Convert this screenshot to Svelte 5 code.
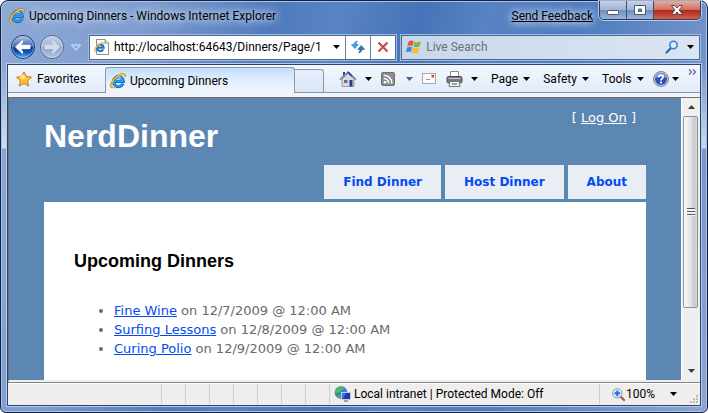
<script>
  let address = $state('http://localhost:64643/Dinners/Page/1');
  let search = $state('');

  const menu = ['Find Dinner', 'Host Dinner', 'About'];

  const dinners = [
    { id: 1, title: 'Fine Wine', date: '12/7/2009', time: '12:00 AM' },
    { id: 2, title: 'Surfing Lessons', date: '12/8/2009', time: '12:00 AM' },
    { id: 3, title: 'Curing Polio', date: '12/9/2009', time: '12:00 AM' }
  ];

  const toolMenus = ['Page', 'Safety', 'Tools'];
  const statusCells = [1, 2, 3, 4, 5, 6, 7];
</script>

{#snippet ieLogo(size)}
  <svg width={size} height={size} viewBox="0 0 16 16" aria-hidden="true">
    <path d="M12.9 10.6A4.9 4.9 0 1 1 13.3 8.4H4.6" fill="none" stroke="#1462b8" stroke-width="3.2" />
    <path d="M12.7 10.4A4.8 4.8 0 1 1 13.1 8.2H4.8" fill="none" stroke="#2c9df0" stroke-width="2" />
    <path d="M4.6 5.6A4.8 4.8 0 0 1 11 4.8" fill="none" stroke="#8fdcff" stroke-width="1" />
    <path d="M2.2 14.6C-.6 12.6 2.4 6.6 7.4 3.2C11.2.6 15.4.2 15 3.6" fill="none" stroke="#b87a0c" stroke-width="1.8" />
    <path d="M2.4 14.4C0 12.2 2.8 6.6 7.6 3.4C11.2 1 14.8.6 14.8 3.2" fill="none" stroke="#fbc638" stroke-width="1.2" />
    <path d="M2.2 14.6C3.4 15.2 4.8 14.6 6 13.8" fill="none" stroke="#eaa91d" stroke-width="1" />
  </svg>
{/snippet}

{#snippet caret()}
  <svg class="caret" width="7" height="4" viewBox="0 0 7 4" aria-hidden="true">
    <path d="M0 0H7L3.5 4Z" fill="currentColor" />
  </svg>
{/snippet}

<div class="window">
  <header class="title-bar">
    {@render ieLogo(16)}
    <span class="title">Upcoming Dinners - Windows Internet Explorer</span>
    <a class="feedback" href="#feedback">Send Feedback</a>
    <div class="window-buttons">
      <button aria-label="Minimize">
        <svg width="14" height="12" viewBox="0 0 14 12">
          <rect x="1.5" y="6.5" width="11" height="4" rx="1" fill="#fff" stroke="#4b5568" />
        </svg>
      </button>
      <button aria-label="Maximize">
        <svg width="14" height="12" viewBox="0 0 14 12">
          <path d="M1.5 1.5H12.5V10.5H1.5ZM5.5 5V7.5H8.5V5Z" fill="#fff" stroke="#4b5568" fill-rule="evenodd" />
        </svg>
      </button>
      <button class="close" aria-label="Close">
        <svg width="14" height="12" viewBox="0 0 14 12">
          <path d="M1.5 1.5H5L7 4L9 1.5H12.5L9.2 6L12.5 10.5H9L7 8L5 10.5H1.5L4.8 6Z" fill="#fff" stroke="#5b4a52" />
        </svg>
      </button>
    </div>
  </header>

  <div class="nav-bar">
    <div class="travel">
      <button class="back" aria-label="Back">
        <svg width="26" height="26" viewBox="0 0 26 26">
          <defs>
            <linearGradient id="back-fill" x1="0" y1="0" x2="0" y2="1">
              <stop offset="0" stop-color="#b9c9e8" />
              <stop offset=".48" stop-color="#3d66b4" />
              <stop offset=".5" stop-color="#0c2f84" />
              <stop offset=".75" stop-color="#1859b8" />
              <stop offset="1" stop-color="#5fd0ff" />
            </linearGradient>
          </defs>
          <circle cx="13" cy="13" r="11.5" fill="url(#back-fill)" stroke="#1e386c" />
          <circle cx="13" cy="13" r="10.5" fill="none" stroke="#a9c6ee" stroke-opacity=".6" />
          <path d="M5.5 13L12.5 6.5V8.5L10.5 11.3H20V14.7H10.5L12.5 17.5V19.5Z" fill="#fff" stroke="#fff" stroke-linejoin="round" />
        </svg>
      </button>
      <button class="forward" aria-label="Forward">
        <svg width="26" height="26" viewBox="0 0 26 26">
          <defs>
            <linearGradient id="forward-fill" x1="0" y1="0" x2="0" y2="1">
              <stop offset="0" stop-color="#c3d0e5" />
              <stop offset=".48" stop-color="#a3b5d3" />
              <stop offset=".5" stop-color="#8aa1c8" />
              <stop offset="1" stop-color="#b5c6e0" />
            </linearGradient>
          </defs>
          <circle cx="13" cy="13" r="11.5" fill="url(#forward-fill)" stroke="#4a6592" />
          <circle cx="13" cy="13" r="10.5" fill="none" stroke="#d5e1f3" stroke-opacity=".7" />
          <path d="M20.5 13L13.5 6.5V8.5L15.5 11.3H6V14.7H15.5L13.5 17.5V19.5Z" fill="#d3ddec" stroke="#d3ddec" stroke-linejoin="round" />
        </svg>
      </button>
      <button class="recent" aria-label="Recent pages">
        <svg width="10" height="7" viewBox="0 0 10 7">
          <path d="M.5 1H9.5L5 6.2Z" fill="#6fb5ef" stroke="#dcebfc" />
        </svg>
      </button>
    </div>

    <div class="field address">
      <svg width="16" height="16" viewBox="0 0 16 16" aria-hidden="true">
        <path d="M2.5.5H11L14.5 4V15.5H2.5Z" fill="#fff" stroke="#8d8d8d" />
        <path d="M11 .5V4H14.5" fill="#e4e4e4" stroke="#8d8d8d" />
        <path d="M9.2 10.4A3.3 3.3 0 1 1 9.6 8.6H3.6" fill="none" stroke="#1f77cc" stroke-width="2.2" />
        <path d="M1.4 12.8C-.2 11 2 7.4 5 5.4C7.4 3.8 10.4 3.2 10.2 5.4" fill="none" stroke="#f0b02a" stroke-width="1.3" />
      </svg>
      <input type="text" aria-label="Address" bind:value={address} />
      <button class="drop" aria-label="Show addresses">{@render caret()}</button>
      <button class="go" aria-label="Refresh">
        <svg width="14" height="14" viewBox="0 0 14 14">
          <path d="M6.5 1.2C4.4 1.4 3.2 2.6 3 4.6H.4L3.8 8.6L7.2 4.6H5C5 3.2 5.4 2.2 6.5 1.2Z" fill="#4a9fe4" stroke="#2673bd" stroke-width=".6" />
          <path d="M7.5 12.8C9.6 12.6 10.8 11.4 11 9.4H13.6L10.2 5.4L6.8 9.4H9C9 10.8 8.6 11.8 7.5 12.8Z" fill="#2f78c8" stroke="#1d4f98" stroke-width=".6" />
        </svg>
      </button>
      <button class="go" aria-label="Stop">
        <svg width="12" height="12" viewBox="0 0 12 12">
          <path d="M1.5 1.5L10.5 10.5M10.5 1.5L1.5 10.5" stroke="#cf4a4a" stroke-width="2.2" />
        </svg>
      </button>
    </div>

    <div class="field search">
      <svg width="16" height="16" viewBox="0 0 16 16" aria-hidden="true">
        <path d="M2.6 2.4C4.4 1.2 6 1.3 7.7 2.2L6.4 7.2C4.8 6.3 3.2 6.3 1.3 7.4Z" fill="#e8592b" />
        <path d="M8.7 2.7C10.6 3.6 12.6 3.6 15 2.3L13.7 7.3C11.4 8.5 9.4 8.4 7.4 7.6Z" fill="#7fb93c" />
        <path d="M1 8.5C2.8 7.4 4.5 7.4 6.1 8.3L4.8 13.2C3.2 12.4 1.6 12.4-.2 13.4Z" fill="#3c86dc" />
        <path d="M7.1 8.7C9 9.6 11.1 9.5 13.4 8.4L12.1 13.3C9.9 14.6 7.8 14.5 5.8 13.6Z" fill="#f9b924" />
      </svg>
      <input type="text" aria-label="Search" placeholder="Live Search" bind:value={search} />
      <button class="drop" aria-label="Search">
        <svg width="14" height="14" viewBox="0 0 14 14">
          <path d="M6 8L1.5 12.5" stroke="#2f5fa8" stroke-width="2.2" stroke-linecap="round" />
          <circle cx="8.5" cy="5" r="3.7" fill="#dcecfb" stroke="#3483cf" stroke-width="1.6" />
        </svg>
      </button>
      <button class="drop" aria-label="Search options">{@render caret()}</button>
    </div>
  </div>

  <div class="client">
    <div class="command-bar">
      <button class="favorites">
        <svg width="16" height="16" viewBox="0 0 16 16" aria-hidden="true">
          <path d="M8 .8L10.3 5.6L15.4 6.2L11.6 9.8L12.6 15L8 12.4L3.4 15L4.4 9.8L.6 6.2L5.7 5.6Z" fill="#fdc33a" stroke="#c9790f" stroke-linejoin="round" />
          <path d="M8 3L9.3 6.8L5.5 9.3L6.5 6.8L3 7Z" fill="#ffe9a2" />
        </svg>
        Favorites
      </button>
      <button class="tab">
        {@render ieLogo(16)}
        Upcoming Dinners
      </button>
      <button class="new-tab" aria-label="New tab"></button>

      <div class="tools">
        <button aria-label="Home">
          <svg width="18" height="16" viewBox="0 0 18 16">
            <path d="M4 1H6V5H4Z" fill="#2d3b9e" />
            <path d="M3 8V15.5H15V8L9 2.5Z" fill="#d9dbe4" stroke="#8a8a96" stroke-width=".8" />
            <path d="M1 8.6L9 1.2L17 8.6" fill="none" stroke="#7d8098" stroke-width="1.6" />
            <path d="M9 1.2L13 5" stroke="#2d3b9e" stroke-width="1.6" />
            <path d="M10.5 9H13.5V15.5H10.5Z" fill="#203a94" />
            <path d="M5 9H8.5V12H5Z" fill="#6d6d74" />
          </svg>
          {@render caret()}
        </button>
        <button class="muted" aria-label="Feeds">
          <svg width="14" height="14" viewBox="0 0 14 14">
            <rect x=".5" y=".5" width="13" height="13" rx="1.5" fill="#8c8c8c" stroke="#6f6f6f" />
            <circle cx="4" cy="10.2" r="1.3" fill="#fff" />
            <path d="M2.8 6.4A4.8 4.8 0 0 1 7.6 11.4M2.8 3.2A8 8 0 0 1 10.8 11.4" fill="none" stroke="#fff" stroke-width="1.5" />
          </svg>
          {@render caret()}
        </button>
        <button aria-label="Read mail">
          <svg width="14" height="11" viewBox="0 0 14 11">
            <rect x=".5" y=".5" width="13" height="10" fill="#fafafa" stroke="#a8a8a8" />
            <path d="M9.5 2H12V4.5H9.5Z" fill="#d8402e" />
            <path d="M4 6.5H8" stroke="#999" />
          </svg>
        </button>
        <button aria-label="Print">
          <svg width="17" height="16" viewBox="0 0 17 16">
            <path d="M4.5 6V.5H12.5V6" fill="#fff" stroke="#8a8a8a" />
            <rect x="1" y="5.5" width="15" height="6.5" rx="1.5" fill="#77797d" stroke="#4c4e52" />
            <path d="M2.5 7.5H14.5" stroke="#c8cacd" />
            <path d="M4 10.5H13L14 15.5H3Z" fill="#f5f5f5" stroke="#7a7a7a" />
            <path d="M6 13H11" stroke="#4f9a44" stroke-width="1.4" />
          </svg>
          {@render caret()}
        </button>
        {#each toolMenus as name}
          <button class="menu">{name} {@render caret()}</button>
        {/each}
        <button class="help" aria-label="Help">
          <svg width="16" height="16" viewBox="0 0 16 16">
            <circle cx="8" cy="8" r="7.4" fill="#d4d8e0" stroke="#6d7488" />
            <circle cx="8" cy="8" r="6" fill="#2a50b8" />
            <path d="M2.4 7A5.7 5.7 0 0 1 13.6 7C10 5.5 6 5.8 2.4 7Z" fill="#7f9ae0" />
            <path d="M5.8 6.2C5.9 3.4 10.3 3.5 10.2 6C10.1 7.6 8 7.6 8 9.4" fill="none" stroke="#fff" stroke-width="1.7" />
            <rect x="7.1" y="10.6" width="1.8" height="1.8" fill="#fff" />
          </svg>
          {@render caret()}
        </button>
        <button class="more" aria-label="More tools">
          <svg width="9" height="6" viewBox="0 0 9 6">
            <path d="M1 .5L3.5 3L1 5.5M5 .5L7.5 3L5 5.5" fill="none" stroke="#5d63ae" stroke-width="1.2" />
          </svg>
        </button>
      </div>
    </div>

    <div class="viewport">
      <div class="page">
        <div class="page-header">
          <h1>NerdDinner</h1>
          <div class="login">[ <a href="#logon">Log On</a> ]</div>
        </div>
        <nav>
          {#each menu as item}
            <a href="#{item}">{item}</a>
          {/each}
        </nav>
        <main>
          <h2>Upcoming Dinners</h2>
          <ul>
            {#each dinners as dinner (dinner.id)}
              <li>
                <a href="#dinner-{dinner.id}">{dinner.title}</a>
                on {dinner.date} @ {dinner.time}
              </li>
            {/each}
          </ul>
        </main>
      </div>

      <div class="scrollbar">
        <button class="arrow up" aria-label="Scroll up">{@render caret()}</button>
        <div class="thumb"><span class="grip"></span></div>
        <div class="track"></div>
        <button class="arrow" aria-label="Scroll down">{@render caret()}</button>
      </div>
    </div>

    <footer class="status-bar">
      <div class="message"></div>
      {#each statusCells as cell (cell)}
        <div class="cell"></div>
      {/each}
      <div class="zone">
        <svg width="17" height="16" viewBox="0 0 17 16" aria-hidden="true">
          <circle cx="7" cy="6.5" r="6" fill="#2f86d6" stroke="#2a6cab" stroke-width=".6" />
          <path d="M3 2.5C5 .5 9 .5 10 2C9 4 7 3.5 6.5 5.5C5 7.5 3 6 1.5 7.5C1 5.5 1.5 3.8 3 2.5ZM4 9C6 8.5 7 9.5 6.5 12.2C5 12 3.6 11 3 10Z" fill="#4cc14a" />
          <rect x="7.5" y="6.5" width="9" height="7" fill="#1a36b4" stroke="#c9cbd2" />
          <path d="M8 7H12L9 13H8Z" fill="#4a6ae0" />
          <path d="M10 15H14" stroke="#8e9098" stroke-width="1.6" />
        </svg>
        <span>Local intranet | Protected Mode: Off</span>
      </div>
      <button class="zoom">
        <svg width="13" height="13" viewBox="0 0 13 13" aria-hidden="true">
          <path d="M8.5 8.5L12 12" stroke="#9a5f35" stroke-width="2.2" stroke-linecap="round" />
          <circle cx="5.3" cy="5.3" r="4.7" fill="#dceefc" stroke="#7f9bbd" />
          <path d="M5.3 2.4V8.2M2.4 5.3H8.2" stroke="#1f6fd0" stroke-width="2" />
        </svg>
        <span>100%</span>
        {@render caret()}
      </button>
      <svg class="resize" width="9" height="9" viewBox="0 0 9 9" aria-hidden="true">
        <path d="M6 0H8V2H6ZM6 3H8V5H6ZM3 3H5V5H3ZM6 6H8V8H6ZM3 6H5V8H3ZM0 6H2V8H0Z" fill="#bdb9b9" />
      </svg>
    </footer>
  </div>
</div>

<style>
  :global(body) {
    margin: 0;
    background: #fff;
  }

  .window {
    box-sizing: border-box;
    display: flex;
    flex-direction: column;
    min-height: 100vh;
    padding: 0 6px 6px;
    border: 1px solid #14213f;
    border-radius: 8px 8px 6px 6px;
    box-shadow: inset 0 0 0 1px #a9c3e8;
    background:
      linear-gradient(180deg, transparent 64px, rgba(225, 235, 248, 0.8) 147px, transparent 148px),
      linear-gradient(105deg, #8faad5 0, #7f9ccf 18%, #4f7bbd 34%, #5883c5 42%, #4674b8 52%, #5783c4 60%, #4d7dbe 72%, #698dc7 84%, #8ba6d2 100%);
    font: 12px/16px Roboto, 'Open Sans', sans-serif;
    color: #000;
  }

  button {
    display: flex;
    align-items: center;
    justify-content: center;
    padding: 0;
    border: 0;
    background: none;
    font: inherit;
    color: inherit;
    cursor: pointer;
  }

  .caret {
    flex: none;
  }

  .title-bar {
    display: flex;
    align-items: center;
    gap: 4px;
    height: 29px;
    padding-left: 2px;
  }

  .title,
  .feedback {
    color: #000;
    white-space: nowrap;
    text-shadow: 0 0 6px #c3d3ec, 0 0 8px #c3d3ec, 0 0 12px #c3d3ec;
  }

  .feedback {
    margin-left: auto;
  }

  .window-buttons {
    display: flex;
    align-self: flex-start;
    height: 18px;
    margin-left: 2px;
    border: 1px solid #2b3c60;
    border-top: 0;
    border-radius: 0 0 5px 5px;
    box-shadow: 0 0 0 1px rgba(220, 232, 250, 0.7);
    overflow: hidden;
  }

  .window-buttons button {
    width: 27px;
    border-right: 1px solid #3d5076;
    background: linear-gradient(#c3d1e8, #9fb4d6 48%, #6f8fc0 52%, #9ab3da);
  }

  .window-buttons .close {
    width: 46px;
    border-right: 0;
    background: linear-gradient(#e5aca0, #d0705f 48%, #b0281a 52%, #d3614a);
  }

  .nav-bar {
    display: flex;
    align-items: center;
    gap: 5px;
    height: 34px;
    padding-right: 1px;
  }

  .travel {
    display: flex;
    align-items: center;
    gap: 3px;
    padding-left: 3px;
  }

  .recent {
    width: 16px;
    height: 26px;
  }

  .field {
    display: flex;
    align-items: center;
    flex: 35;
    box-sizing: border-box;
    height: 25px;
    padding-left: 4px;
    border: 1px solid #50698f;
    box-shadow: 0 0 0 1px #9fbbe2;
    background: #fff;
  }

  .address {
    flex: 36;
  }

  .search {
    background: linear-gradient(90deg, #c8d8ec, #dae5f3);
  }

  .field input {
    flex: 1;
    min-width: 0;
    padding: 0 4px;
    border: 0;
    outline: 0;
    background: none;
    font: inherit;
    color: #000;
  }

  .field input::placeholder {
    color: #6c6f75;
    opacity: 1;
  }

  .drop {
    width: 18px;
    height: 100%;
  }

  .go {
    width: 25px;
    height: 100%;
    border-left: 1px solid #6a7f9f;
  }

  .client {
    display: flex;
    flex: 1;
    flex-direction: column;
    border: 1px solid #2b4370;
    box-shadow: 0 0 0 1px #b7cbe8;
    background: #f0f4fa;
  }

  .command-bar {
    display: flex;
    align-items: stretch;
    height: 28px;
    margin-bottom: 4px;
    background: linear-gradient(#f4f8fe, #dfeafa);
  }

  .favorites {
    width: 97px;
    justify-content: flex-start;
    gap: 5px;
    padding-left: 8px;
    border-bottom: 1px solid #8e99a8;
  }

  .tab {
    width: 190px;
    justify-content: flex-start;
    gap: 4px;
    margin-top: 2px;
    padding-left: 4px;
    border: 1px solid #8e99a8;
    border-bottom: 0;
    border-radius: 3px 3px 0 0;
    background: linear-gradient(#c3ddfb, #e4f0fd 55%, #f0f4fa);
  }

  .new-tab {
    width: 29px;
    margin-top: 4px;
    border: 1px solid #8e99a8;
    border-left: 0;
    border-radius: 0 3px 0 0;
    background: linear-gradient(#e6effb, #d9e5f6);
  }

  .tools {
    display: flex;
    flex: 1;
    align-items: center;
    justify-content: space-between;
    padding: 0 3px 0 15px;
    border-bottom: 1px solid #8e99a8;
  }

  .tools button {
    gap: 8px;
  }

  .tools .muted {
    gap: 11px;
    color: #5d6068;
  }

  .tools .menu {
    gap: 5px;
    margin-left: 4px;
  }

  .tools .help {
    gap: 3px;
  }

  .tools .more {
    align-self: flex-start;
    height: 14px;
  }

  .viewport {
    display: flex;
    flex: 1;
    border-top: 1px solid #716f6e;
    border-left: 1px solid #716f6e;
    border-bottom: 2px solid #f0eded;
  }

  .page {
    flex: 1;
    display: flex;
    flex-direction: column;
    padding: 0 35px;
    background: #5c87b2;
    font: 13px/19px 'DejaVu Sans', Verdana, sans-serif;
    color: #696969;
  }

  .page-header {
    display: flex;
    align-items: flex-start;
    justify-content: space-between;
    height: 67px;
  }

  h1,
  h2 {
    margin: 0;
    font-family: 'Liberation Sans', Arial, sans-serif;
    font-weight: bold;
  }

  h1 {
    padding-top: 19px;
    font-size: 32px;
    line-height: 38px;
    color: #fff;
  }

  .login {
    padding: 10px 10px 0 0;
    color: #fff;
  }

  .login a {
    color: #fff;
  }

  nav {
    display: flex;
    justify-content: flex-end;
    gap: 4px;
    margin-bottom: 3px;
    font-size: 12px;
  }

  nav a {
    padding: 8px 19px 7px;
    background: #e8eef4;
    font-weight: bold;
    color: #034af3;
    text-decoration: none;
    white-space: nowrap;
  }

  main {
    flex: 1;
    padding: 48px 30px 20px;
    background: #fff;
  }

  h2 {
    font-size: 18px;
    line-height: 22px;
    color: #000;
  }

  ul {
    margin: 0;
    padding: 29px 0 0 40px;
  }

  li a {
    color: #034af3;
  }

  .scrollbar {
    display: flex;
    flex-direction: column;
    width: 18px;
    border-left: 1px solid #fff;
    background: #f0efef;
  }

  .arrow {
    height: 18px;
    color: #3c3c3c;
  }

  .up .caret {
    transform: rotate(180deg);
  }

  .thumb {
    display: flex;
    flex: 190;
    align-items: center;
    justify-content: center;
    margin: 0 2px 0 1px;
    border: 1px solid #8f9296;
    border-radius: 2px;
    background: linear-gradient(90deg, #f8f8f8, #e6e6e8 45%, #c6c8cc 80%, #d8dadd);
  }

  .grip {
    width: 8px;
    height: 8px;
    background: repeating-linear-gradient(#55585c 0 1px, #f4f4f4 1px 3px);
  }

  .track {
    flex: 54;
  }

  .status-bar {
    display: flex;
    align-items: center;
    height: 22px;
    border-top: 1px solid #848282;
    box-shadow: inset 0 1px 0 #fff;
    background: #f0eded;
  }

  .message {
    flex: 1;
  }

  .cell,
  .zone,
  .zoom {
    box-sizing: border-box;
    height: 20px;
    border-left: 1px solid #d0cdcd;
  }

  .cell {
    width: 24px;
  }

  .zone {
    display: flex;
    align-items: center;
    gap: 3px;
    width: 270px;
    padding-left: 4px;
    white-space: nowrap;
  }

  .zoom {
    width: 91px;
    justify-content: flex-start;
    padding-left: 12px;
    gap: 1px;
  }

  .zoom .caret {
    margin-left: 14px;
  }

  .resize {
    align-self: flex-end;
    margin: 0 1px 1px 0;
  }
</style>
